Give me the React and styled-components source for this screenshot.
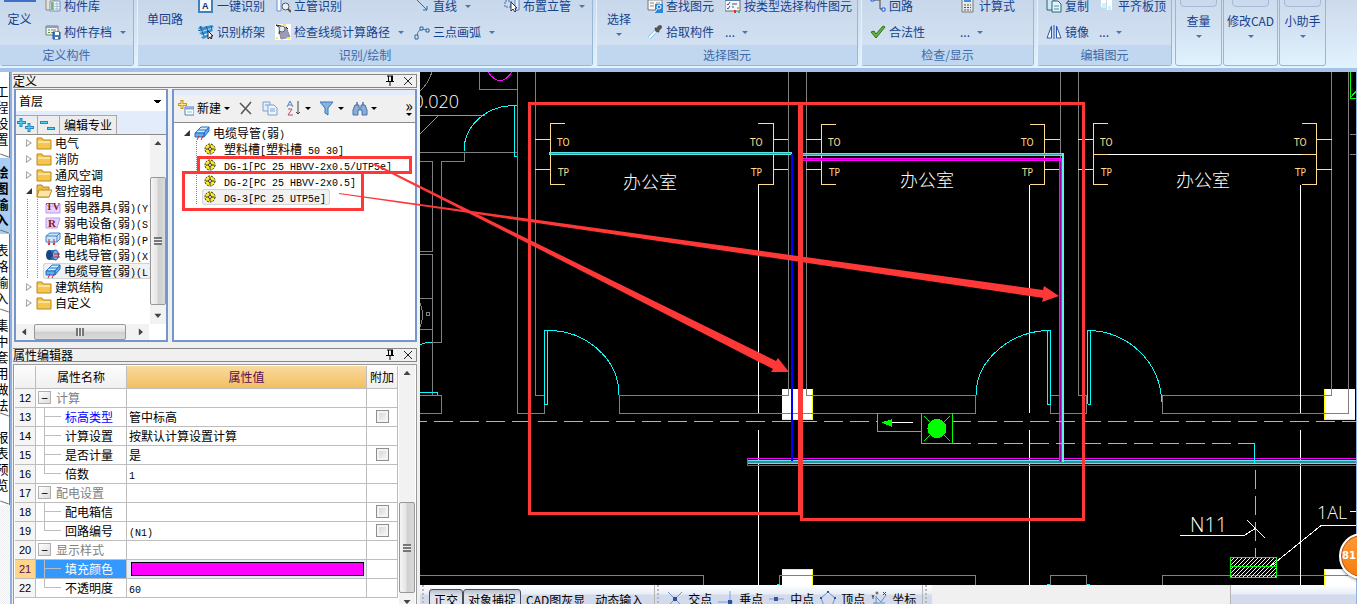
import React, { useState } from "react";
import styled, { createGlobalStyle, css } from "styled-components";

const ribbonGroups = [
  {
    title: "定义构件",
    big: { label: "定义", art: "define", width: 45 },
    columns: [
      {
        width: 88,
        items: [
          { icon: "library", label: "构件库" },
          { icon: "archive", label: "构件存档", menu: true },
        ],
      },
    ],
  },
  {
    title: "识别/绘制",
    big: { label: "单回路", art: "loop", width: 60 },
    columns: [
      {
        width: 77,
        items: [
          { icon: "autoText", label: "一键识别" },
          { icon: "bridge", label: "识别桥架" },
        ],
      },
      {
        width: 139,
        items: [
          { icon: "pipeSearch", label: "立管识别" },
          { icon: "pathCheck", label: "检查线缆计算路径", menu: true },
        ],
      },
      {
        width: 90,
        items: [
          { icon: "line", label: "直线", menu: true },
          { icon: "arc", label: "三点画弧", menu: true },
        ],
      },
      { width: 88, items: [{ icon: "riser", label: "布置立管", menu: true }, null] },
    ],
  },
  {
    title: "选择图元",
    big: { label: "选择", art: "select", width: 50, menu: true },
    columns: [
      {
        width: 78,
        items: [
          { icon: "find", label: "查找图元" },
          { icon: "picker", label: "拾取构件" },
        ],
      },
      { width: 132, items: [{ icon: "types", label: "按类型选择构件图元" }, { label: "...", menu: true }] },
    ],
  },
  {
    title: "检查/显示",
    columns: [
      {
        width: 90,
        items: [
          { icon: "circuit", label: "回路" },
          { icon: "check", label: "合法性" },
        ],
      },
      { width: 73, items: [{ icon: "calc", label: "计算式" }, { label: "...", menu: true }] },
    ],
  },
  {
    title: "编辑图元",
    columns: [
      {
        width: 53,
        items: [
          { icon: "copy", label: "复制" },
          { icon: "mirror", label: "镜像" },
        ],
      },
      { width: 72, items: [{ icon: "align", label: "平齐板顶" }, { label: "...", menu: true }] },
    ],
  },
];

const tallButtons = [
  { label: "查量", width: 47 },
  { label: "修改CAD", width: 55 },
  { label: "小助手", width: 47 },
];

const sideTabs = [
  { label: "工程设置", height: 86 },
  { label: "绘图输入", height: 76, active: true },
  { label: "表格输入", height: 79 },
  { label: "集中套用做法", height: 104 },
  { label: "报表预览", height: 88 },
];

const categories = [
  { label: "电气", icon: "folder" },
  { label: "消防", icon: "folder" },
  { label: "通风空调", icon: "folder" },
  {
    label: "智控弱电",
    icon: "folderOpen",
    children: [
      { label: "弱电器具(弱)(Y)", icon: "tv" },
      { label: "弱电设备(弱)(S)", icon: "device" },
      { label: "配电箱柜(弱)(P)", icon: "cabinet" },
      { label: "电线导管(弱)(X)", icon: "conduit" },
      { label: "电缆导管(弱)(L)", icon: "tray", selected: true },
    ],
  },
  { label: "建筑结构", icon: "folder" },
  { label: "自定义", icon: "folder" },
];

const components = [
  { label: "塑料槽[塑料槽 50 30]" },
  { label: "DG-1[PC 25 HBVV-2x0.5/UTP5e]" },
  { label: "DG-2[PC 25 HBVV-2x0.5]" },
  { label: "DG-3[PC 25 UTP5e]", selected: true },
];

const properties = [
  { id: 12, name: "计算", group: true },
  { id: 13, name: "标高类型", value: "管中标高", extra: true, link: true },
  { id: 14, name: "计算设置", value: "按默认计算设置计算" },
  { id: 15, name: "是否计量", value: "是", extra: true },
  { id: 16, name: "倍数", value: "1", last: true },
  { id: 17, name: "配电设置", group: true },
  { id: 18, name: "配电箱信", value: "", extra: true },
  { id: 19, name: "回路编号", value: "(N1)", extra: true, last: true },
  { id: 20, name: "显示样式", group: true },
  { id: 21, name: "填充颜色", color: "#ff00ff", selected: true },
  { id: 22, name: "不透明度", value: "60", last: true },
];

const icons = {
  library: (
    <>
      <path d="M1 1h8v11H1z" fill="#e6e2d8" stroke="#8d8a84" />
      <path d="M5 3h10v10H5z" fill="#fff" stroke="#6e8fb5" />
      <path d="M6 6h9M6 8.500h9M6 11h9M8.500 4v9M12 4v9" stroke="#9fb7d3" />
      <path d="M6 4h2v8H6z" fill="#7db36b" />
    </>
  ),
  archive: (
    <>
      <path d="M1 2h12v9H1z" fill="#f4f2ea" stroke="#7a7a74" />
      <path d="M1 2h12v2H1z" fill="#8aa0bd" />
      <path d="M3 6h2M3 8.500h2" stroke="#4a9a45" />
      <path d="M6 6h5M6 8.500h4" stroke="#888" />
      <path d="M8 8h7v7H8z" fill="#3f7fc4" stroke="#24568f" />
      <path d="M10 8h4v3h-4zM10 13h3v2h-3z" fill="#fff" />
    </>
  ),
  autoText: (
    <>
      <path d="M1 1h13v13H1z" fill="#f3f9fe" stroke="#3f83b8" strokeWidth="2" />
      <text x="4" y="11" fontSize="9" fontWeight="700" fontFamily="Liberation Sans" fill="#15315e">A</text>
    </>
  ),
  bridge: (
    <>
      <path d="M0 4l3-2 2 1 9-2 2 2-12 4zM1 9l12-4 2 2-11 4zM3 13l8-3 1 2-7 3z" fill="#2f93d8" />
      <path d="M2 2l4 10M8 2l3 8M0 6l3 1M13 2l1 4" stroke="#155c96" />
      <path d="M10 7v8l2-2 1 2 1-1-1-2h2z" fill="#fff" stroke="#223" />
    </>
  ),
  pipeSearch: (
    <>
      <path d="M2 0h4v13H2z" fill="#f6faff" stroke="#6f8fd0" />
      <circle cx="10.500" cy="8.500" r="3.500" fill="#e9f2fb" stroke="#555" />
      <path d="M13 11l3 3" stroke="#555" strokeWidth="2" />
    </>
  ),
  pathCheck: (
    <>
      <path d="M0 0h16v16H0z" fill="#fff" />
      <path d="M4 6l7-3 4 10-9 2z" fill="#9b9cb5" stroke="#889" />
      <path d="M1 1l4 3-1 6M1 1l5 1M11 3l2 2" stroke="#222" fill="none" />
      <circle cx="7" cy="5" r="3" fill="#e2e6f5" stroke="#667" />
      <path d="M8 0h3v2H8zM1 13h2v2H1zM12 13h3v2h-3z" fill="#ffee22" />
    </>
  ),
  line: <path d="M2 1l11 11M13 8v4H9" stroke="#1f6fae" fill="none" />,
  arc: (
    <>
      <path d="M3 13Q3 3 13 6" stroke="#7b6f6f" fill="none" />
      <path d="M1 11h3v4H1zM6 3h3v3H6zM12 5h3v3h-3z" fill="#cfe6fb" stroke="#2c6596" />
    </>
  ),
  riser: (
    <>
      <path d="M1 3h6v6H1z" fill="none" stroke="#3b6fae" strokeDasharray="2 1" />
      <path d="M11 1h4v11h-4z" fill="#e5f0ff" stroke="#5a82c8" />
      <path d="M7 4v9l2-2 2 3 1-1-1-3h2z" fill="#fff" stroke="#334" />
    </>
  ),
  find: (
    <>
      <path d="M1 0h14v12H1z" fill="#f8f8f4" stroke="#777" />
      <path d="M1 2h14M3 5h4M3 8h4M9 5h4" stroke="#888" />
      <path d="M8 6h8v9H8z" fill="#2c86d8" />
      <circle cx="12" cy="9" r="2" stroke="#fff" fill="none" />
      <path d="M10 11l-2 3" stroke="#fff" />
    </>
  ),
  picker: (
    <>
      <path d="M2 14l7-7" stroke="#5aa0d8" strokeWidth="3" />
      <path d="M2 14l7-7" stroke="#fff" strokeWidth="2" />
      <path d="M8 4l4 4" stroke="#444" strokeWidth="2" />
      <path d="M10 6l3-3" stroke="#555" strokeWidth="4" strokeLinecap="round" />
      <path d="M0 14h3v2H0z" fill="#aef2ff" />
    </>
  ),
  types: (
    <>
      <path d="M0 1h15v12H0z" fill="#f2f6fb" stroke="#667" />
      <path d="M0 2h15" stroke="#5d7fae" strokeWidth="2" />
      <path d="M2 6l1 1 2-3M2 10l1 1 2-3" stroke="#456" fill="none" />
      <path d="M7 6h5M7 9h2" stroke="#456" />
      <path d="M9 12h2v3H9z" fill="#d33" />
      <path d="M12 9h2v2h-2z" fill="#e9b93a" />
      <path d="M13 13h2v2h-2z" fill="#3b9" />
    </>
  ),
  circuit: (
    <>
      <path d="M3 2h7v9h4" stroke="#444" fill="none" />
      <path d="M1 0h3v3H1zM12 10h3v3h-3z" fill="#fff" stroke="#1750d8" />
    </>
  ),
  check: <path d="M1 8l3-1 2 3 7-8 2 1-9 11z" fill="#62b53c" stroke="#2f6f1b" />,
  calc: (
    <>
      <path d="M2 0h11v14H2z" fill="#e8e8e8" stroke="#777" />
      <path d="M4 1h7v3H4z" fill="#3f8fe0" />
      <path d="M4 7h7M4 9.500h7M4 12h7" stroke="#555" strokeDasharray="2 1" />
    </>
  ),
  copy: (
    <>
      <path d="M1 1h7v11H1z" fill="#cfe7f2" stroke="#2d6377" />
      <path d="M6 3h6l3 3v8H6z" fill="#e3f3fa" stroke="#2d6377" />
      <path d="M8 8h5M8 11h5" stroke="#4c91b0" />
    </>
  ),
  mirror: (
    <>
      <path d="M5.500 2v12H1zM10.500 2v12H15z" fill="#f4f8ff" stroke="#2d58a8" />
      <path d="M8 1v14" stroke="#2d58a8" />
    </>
  ),
  align: (
    <>
      <path d="M2 1h5v8H2zM8 1h5v11H8z" fill="#fff" />
      <path d="M3 5h4v5H3zM9 8h3v4H9z" fill="#c8f6fa" />
    </>
  ),
  folder: (
    <>
      <path d="M1 3h5l1 2h8v9H1z" fill="#f4c64f" stroke="#b98a25" />
      <path d="M2 6h12v2H2z" fill="#fbe29a" />
    </>
  ),
  folderOpen: (
    <>
      <path d="M1 2h5l1 2h6v10H1z" fill="#f0bc3e" stroke="#b98a25" />
      <path d="M3 7h13l-3 7H1z" fill="#fde6a4" stroke="#b98a25" />
    </>
  ),
  tv: (
    <>
      <path d="M1 14V5l2 2h10l2-2v9z" fill="#e4d4ff" stroke="#b79aec" />
      <text x="1" y="11" fontSize="10" fontWeight="700" fontFamily="Liberation Serif" fill="#8c1420">TV</text>
    </>
  ),
  device: (
    <>
      <path d="M1 3h14l-3 10H1z" fill="#e4d4ff" stroke="#b79aec" />
      <text x="3" y="12" fontSize="11" fontWeight="700" fontFamily="Liberation Serif" fill="#8c1420">R</text>
    </>
  ),
  cabinet: (
    <>
      <path d="M1 5l4-3h10v6l-3 3H1z" fill="#cde5fb" stroke="#3f83c6" />
      <path d="M1 5h11v6M12 5l3-3" stroke="#3f83c6" fill="none" />
      <path d="M4 8v6M9 8v6M3 12l1 2 1-2M8 12l1 2 1-2" stroke="#d22" fill="none" />
    </>
  ),
  conduit: (
    <>
      <path d="M4 3h7v10H4z" fill="#2f74c4" />
      <ellipse cx="4" cy="8" rx="3" ry="5" fill="#16457f" />
      <ellipse cx="10.500" cy="8" rx="3" ry="5" fill="#7fb4e8" stroke="#1d4d86" />
      <path d="M9 7h6M9 10h6" stroke="#e01b24" />
    </>
  ),
  tray: (
    <>
      <path d="M1 8l6-6h8l-5 6z" fill="#d6ebfd" stroke="#1f73c7" />
      <path d="M1 8h9v4H1zM10 8l5-6v4l-5 6z" fill="#5eaef2" stroke="#1f73c7" />
      <path d="M4 5h8" stroke="#1f73c7" />
      <path d="M5 11l-2 4M9 11l-2 4" stroke="#e01b24" />
    </>
  ),
  gear: (
    <>
      <circle cx="6" cy="8" r="5" fill="#ffee22" stroke="#222" strokeDasharray="2 1" />
      <circle cx="6" cy="8" r="3" fill="#ffee22" />
      <circle cx="6" cy="8" r="1.500" fill="#fff" stroke="#333" />
      <path d="M6 4v2M6 10v2M2 8h2M8 8h2" stroke="#333" />
    </>
  ),
  create: (
    <>
      <path d="M4 0v9M0 4.500h9" stroke="#c79a1f" strokeWidth="3" />
      <path d="M4 1v7M1 4.500h7" stroke="#ffe88c" />
      <path d="M7 7h9v8H7z" fill="#fff" stroke="#4f82c4" />
      <path d="M7 8.500h9" stroke="#7aa6de" strokeWidth="2" />
      <path d="M9 12h5" stroke="#9bb" />
    </>
  ),
  remove: <path d="M2 3l11 11M13 2L3 14" stroke="#555" strokeWidth="1.500" fill="none" />,
  duplicate: (
    <>
      <path d="M1 2h7v9H1z" fill="#e5effb" stroke="#7c9fd0" />
      <path d="M6 5h6l3 3v7H6z" fill="#eef5fd" stroke="#7c9fd0" />
      <path d="M8 9h5M8 11h5M3 5h3" stroke="#7c9fd0" />
    </>
  ),
  sort: (
    <>
      <path d="M1 7l3-6 3 6M2 5h4" stroke="#4b83c6" fill="none" />
      <path d="M2 9h4l-4 6h5" stroke="#b8505a" fill="none" />
      <path d="M12 1v13M10 12l2 2 2-2" stroke="#444" fill="none" />
    </>
  ),
  filter: <path d="M1 2h13L9 8v7l-3-2V8z" fill="#84b4e4" stroke="#3b74b5" />,
  binoculars: (
    <>
      <path d="M4 2h2v3H4zM10 2h2v3h-2z" fill="#6f93c4" />
      <path d="M3 5h4v3h2V5h4l2 5v5h-5v-5H6v5H1v-5z" fill="#8cadd8" stroke="#4a70a8" />
    </>
  ),
  pin: <path d="M3 1h6M4.500 1v5M7.500 1v5M8.500 1v5M2 6.500h8M6 7v4" stroke="#000" fill="none" />,
  close: <path d="M2 2l8 8M10 2l-8 8" stroke="#222" fill="none" />,
  plusPlus: (
    <>
      <path d="M5 1v9M1 5.500h9M13 6v9M9 10.500h9" stroke="#2785c9" strokeWidth="3" />
      <path d="M5 2v7M2 5.500h7M13 7v7M10 10.500h7" stroke="#58d4f2" />
    </>
  ),
  minusMinus: (
    <>
      <path d="M2 5.500h8M9 11.500h8" stroke="#2785c9" strokeWidth="3" />
      <path d="M3 5.500h6M10 11.500h6" stroke="#58d4f2" />
    </>
  ),
  snapCross: (
    <>
      <path d="M1 1l14 14M15 1L1 15" stroke="#7094cc" />
      <path d="M6 6h4v4H6z" fill="#2c4f9e" />
    </>
  ),
  snapFoot: (
    <>
      <path d="M0 11h15M12 0v14" stroke="#7aa0dc" />
      <path d="M10 9h4v4h-4z" fill="#2c4f9e" />
    </>
  ),
  snapMid: (
    <>
      <path d="M0 8h15" stroke="#7aa0dc" />
      <path d="M5 6h4v4H5z" fill="#3c5596" />
    </>
  ),
  snapVertex: (
    <>
      <path d="M8 1l7 6-3 8H4L1 7z" fill="none" stroke="#5f94d4" />
      <path d="M7 0h2v2H7zM0 6h2v2H0zM14 6h2v2h-2z" fill="#2c4f9e" />
    </>
  ),
  snapCoord: (
    <>
      <path d="M5 5v9M5 6l5 5 5-7M2 12h12" stroke="#5f94d4" fill="none" />
      <path d="M1 4l1 2 1-2M2 6v2M12 1l3 3M15 1l-3 3" stroke="#444" fill="none" />
      <circle cx="6" cy="2" r="1" fill="none" stroke="#444" />
    </>
  ),
};

const Icon = ({ name, width = 16, height = 16 }) => (
  <IconSvg width={width} height={height} viewBox={`0 0 ${width} ${height}`} aria-hidden="true">
    {icons[name]}
  </IconSvg>
);

// ASCII runs are set in a half-width face so they line up with the ideographs
const MixedText = ({ children }) =>
  children
    .split(/([\x20-\x7e]+)/)
    .map((part, i) => (i % 2 ? <Latin key={i}>{part}</Latin> : part));

const Ribbon = () => (
  <RibbonBar>
    {ribbonGroups.map((group) => (
      <RibbonGroup key={group.title}>
        <GroupBody $pad={group.big ? 0 : 8}>
          {group.big && (
            <BigButton $width={group.big.width}>
              <BigArt $kind={group.big.art} />
              <BigLabel>{group.big.label}</BigLabel>
              {group.big.menu && <Caret />}
            </BigButton>
          )}
          {group.columns.map((column, i) => (
            <RibbonColumn key={i} $width={column.width}>
              {column.items.map(
                (item) =>
                  item && (
                    <RibbonItem key={item.label}>
                      {item.icon && <Icon name={item.icon} />}
                      <span>{item.label}</span>
                      {item.menu && <Caret $gap={item.label === "..." ? 4 : 5} />}
                    </RibbonItem>
                  )
              )}
            </RibbonColumn>
          ))}
        </GroupBody>
        <GroupTitle>{group.title}</GroupTitle>
      </RibbonGroup>
    ))}
    {tallButtons.map((button) => (
      <TallButton key={button.label} $width={button.width}>
        <TallArt />
        <span>{button.label}</span>
        <Caret />
      </TallButton>
    ))}
  </RibbonBar>
);

const Scrollbar = ({ horizontal, before, thumb, after, overhang }) => (
  <ScrollTrack $horizontal={horizontal} $overhang={overhang}>
    <ScrollArrow aria-label={horizontal ? "left" : "up"}>
      <ArrowMark $dir={horizontal ? "left" : "up"} />
    </ScrollArrow>
    <ScrollSpace $grow={before} />
    <ScrollThumb $grow={thumb} $horizontal={horizontal}>
      <ThumbGrip $horizontal={horizontal} />
    </ScrollThumb>
    <ScrollSpace $grow={after} />
    <ScrollArrow aria-label={horizontal ? "right" : "down"}>
      <ArrowMark $dir={horizontal ? "right" : "down"} />
    </ScrollArrow>
  </ScrollTrack>
);

const DockTitle = ({ children }) => (
  <TitleBar>
    <TitleText>{children}</TitleText>
    <IconButton aria-label="pin">
      <Icon name="pin" width={12} height={12} />
    </IconButton>
    <IconButton aria-label="close">
      <Icon name="close" width={12} height={12} />
    </IconButton>
  </TitleBar>
);

const CategoryPane = () => (
  <Pane $grow={153}>
    <FloorSelect aria-label="楼层" defaultValue="首层">
      <option>首层</option>
    </FloorSelect>
    <TreeTools>
      <ToolTab aria-label="展开">
        <Icon name="plusPlus" width={19} height={16} />
      </ToolTab>
      <ToolTab aria-label="折叠">
        <Icon name="minusMinus" width={19} height={16} />
      </ToolTab>
      <ToolTab>编辑专业</ToolTab>
    </TreeTools>
    <TreeArea>
      <TreeScroll>
        <TreeList>
          {categories.map((item) => (
            <li key={item.label}>
              <TreeRow $indent={8}>
                <Expander $open={!!item.children} />
                <Icon name={item.icon} />
                <TreeLabel>{item.label}</TreeLabel>
              </TreeRow>
              {item.children && (
                <ChildList $rail={11} $inner={21}>
                  {item.children.map((child) => (
                    <li key={child.label}>
                      <TreeRow $indent={27} $selected={child.selected}>
                        <Icon name={child.icon} />
                        <TreeLabel>
                          <MixedText>{child.label}</MixedText>
                        </TreeLabel>
                      </TreeRow>
                    </li>
                  ))}
                </ChildList>
              )}
            </li>
          ))}
        </TreeList>
        <Scrollbar before={26} thumb={126} after={3} />
      </TreeScroll>
      <BottomScroll>
        <Scrollbar horizontal before={2} thumb={89} after={7} />
      </BottomScroll>
    </TreeArea>
  </Pane>
);

const ComponentPane = () => (
  <Pane $grow={246}>
    <Toolbar>
      <ToolButton>
        <Icon name="create" />
        <span>新建</span>
        <SmallCaret />
      </ToolButton>
      <ToolButton aria-label="删除">
        <Icon name="remove" />
      </ToolButton>
      <ToolButton aria-label="复制">
        <Icon name="duplicate" />
      </ToolButton>
      <ToolButton aria-label="排序">
        <Icon name="sort" />
        <SmallCaret />
      </ToolButton>
      <ToolButton aria-label="过滤">
        <Icon name="filter" />
        <SmallCaret />
      </ToolButton>
      <ToolButton aria-label="查找">
        <Icon name="binoculars" />
        <SmallCaret />
      </ToolButton>
      <MoreButton aria-label="更多">
        <span>»</span>
        <SmallCaret />
      </MoreButton>
    </Toolbar>
    <ComponentTree>
      <TreeRow $indent={8}>
        <Expander $open />
        <Icon name="tray" />
        <TreeLabel>
          <MixedText>电缆导管(弱)</MixedText>
        </TreeLabel>
      </TreeRow>
      <ChildList $rail={22}>
        {components.map((item) => (
          <li key={item.label}>
            <TreeRow $indent={28} $selected={item.selected}>
              <Icon name="gear" width={12} />
              <TreeLabel $gap={8}>
                <MixedText>{item.label}</MixedText>
              </TreeLabel>
            </TreeRow>
          </li>
        ))}
      </ChildList>
    </ComponentTree>
  </Pane>
);

const PropertyEditor = () => {
  const [checked, setChecked] = useState({});

  const toggle = (id) => {
    setChecked({ ...checked, [id]: !checked[id] });
  };

  return (
    <PropertyBody>
      <TableWrap>
        <PropertyTable>
          <colgroup>
            <col width="21" />
            <col width="91" />
            <col />
            <col width="31" />
          </colgroup>
          <thead>
            <tr>
              <HeadCell />
              <HeadCell>属性名称</HeadCell>
              <HeadCell $active>属性值</HeadCell>
              <HeadCell>附加</HeadCell>
            </tr>
          </thead>
          <tbody>
            {properties.map((row) => (
              <tr key={row.id}>
                <NumberCell $selected={row.selected}>{row.id}</NumberCell>
                <NameCell $selected={row.selected}>
                  <NameInner $group={row.group}>
                    {row.group ? (
                      <Collapse aria-label={`折叠${row.name}`}>−</Collapse>
                    ) : (
                      <Branch $last={row.last} />
                    )}
                    <NameText $group={row.group} $link={row.link}>
                      {row.name}
                    </NameText>
                  </NameInner>
                </NameCell>
                <ValueCell $selected={row.selected}>
                  {row.color ? (
                    <Swatch aria-label={row.name} $color={row.color} />
                  ) : (
                    <MixedText>{row.value || ""}</MixedText>
                  )}
                </ValueCell>
                <CheckCell>
                  {row.extra && (
                    <CheckBox
                      type="checkbox"
                      aria-label={`附加 ${row.name}`}
                      checked={!!checked[row.id]}
                      onChange={() => toggle(row.id)}
                    />
                  )}
                </CheckCell>
              </tr>
            ))}
          </tbody>
        </PropertyTable>
      </TableWrap>
      <Scrollbar before={122} thumb={89} after={1} overhang />
    </PropertyBody>
  );
};

const Drawing = () => (
  <DrawingSvg width="100%" height="100%" role="img" aria-label="平面图">
    <defs>
      <pattern id="hatch" width="4" height="4" patternUnits="userSpaceOnUse">
        <path d="M0 4L4 0M-1 1L1 -1M3 5L5 3" stroke="#fff" />
      </pattern>
    </defs>
    <g transform="translate(-420 -72)" fill="none" shapeRendering="crispEdges">
      {/* columns */}
      <g fill="#fff">
        <path d="M782 389h31v31h-31zM782 569h31v18h-31z" />
        <path d="M1324 389h31v31h-31zM1324 569h33v18h-33z" />
      </g>
      <g stroke="#ffff00">
        <path d="M812.500 389V419.500H782M812.500 587V569.500H782" />
        <path d="M1324.500 389V419.500H1355M1324.500 587V569.500H1357" />
      </g>
      {/* walls */}
      <g stroke="#808080">
        <path d="M432 72Q428 84 420 91M479.500 72V89.500H517M420 152.500H517M464.500 152V161.500H441.500V342.500H432" />
        <path d="M420 161.500H432.500V251.500H420M420 254.500H432.500V395M420 298.500H432M420 329.500H432M420 303Q425 315 420 327" />
        <circle cx="428" cy="314" r="2" />
        <path d="M420 395.500H441.500V413.500H420" />
        <path d="M517.500 72V413.500H544.500V395.500H535.500V72" />
        <path d="M788.500 72V395.500H619.500V413.500H975.500V395.500H806.500V72" />
        <path d="M1060.500 72V395.500H1050.500V413.500H1086.500V395.500H1078.500V72" />
        <path d="M1331.500 72V395.500H1162.500V413.500H1348.500V72M1350 134.500H1357M1350 154.500H1357" />
        <path d="M420 575.500H703.500V586M779.500 586V575.500H975.500V586M1050.500 586V575.500H1086.500V586M1162.500 586V575.500H1348" />
      </g>
      {/* structural axes */}
      <g stroke="#fff">
        <path d="M758.500 185V413M758.500 430V586M1029.500 185V413M1029.500 430V586" />
        <path d="M1300.500 185V413M1300.500 430V586M1108 154.500H1302" />
      </g>
      <path d="M488 72Q500 89 512 72" stroke="#ff00ff" />
      <g stroke="#00ff00">
        <path d="M420 115.500H485M420 134L438 116M1350.500 72V98.500H1357M1351 97L1357 90" />
      </g>
      {/* doors */}
      <g stroke="#00ffff">
        <path d="M464 151C464 125 487 105.500 514.500 105.500V156.500H517M514 105.500H517" />
        <path d="M420 345Q425 342 432 342.500M420 392.500H437.500V395" />
        <path d="M547.500 404.500H544.500V330.500H547.500V404M547 330.500C585 330 619 358 619 395" />
        <path d="M1050.500 404.500H1047.500V330.500H1050.500V404M1047 330.500C1010 332 976 360 976 395" />
        <path d="M1087.500 404.500H1090.500V330.500H1087.500V404M1090 330.500C1128 332 1161 362 1161.500 402" />
        <path d="M777 584.500H780M1047 584.500H1050M1087 584.500H1090" />
      </g>
      {/* sockets */}
      <g stroke="#ffdc8f">
        <path d="M565 123.500H550.500V184.500H565M535 139.500H550M535 169.500H550" />
        <path d="M758 123.500H773.500V184.500H758M773 139.500H788M773 169.500H788" />
        <path d="M836 124.500H821.500V184.500H836M806 139.500H821M806 169.500H821" />
        <path d="M1030 124.500H1044.500V184.500H1030M1044 139.500H1060M1044 169.500H1060" />
        <path d="M1108 123.500H1093.500V184.500H1108M1078 139.500H1093M1078 169.500H1093M1093 154.500H1108" />
        <path d="M1302 123.500H1316.500V184.500H1302M1316 139.500H1332M1316 169.500H1332M1302 154.500H1316" />
      </g>
      {/* cables */}
      <path d="M747 458.500H1357M747 465.500H1357M747.500 458V466" stroke="#ff00ff" />
      <path d="M748 462H1357" stroke="#2f8f9a" strokeWidth="3" />
      <path d="M748 460.500H1357M748 463.500H1357" stroke="#62e4ea" />
      <path d="M549 153.500H792M803 154.500H1063" stroke="#55e6e6" strokeWidth="3" />
      <path d="M551 153.500H791M803 154.500H1062" stroke="#38a0a0" />
      <path d="M803 159.500H1060" stroke="#ff00ff" strokeWidth="3" />
      <path d="M803 159.500H1060" stroke="#a000a0" />
      <path d="M792 154V461" stroke="#0000ff" strokeWidth="2" />
      <path d="M1060.500 158V462" stroke="#ff00ff" strokeWidth="3" />
      <path d="M1060.500 161V462" stroke="#a000a0" />
      <path d="M1063 153V462" stroke="#62f0f0" strokeWidth="2" />
      {/* lighting circuit */}
      <g stroke="#00ffff">
        <path d="M420 421.500H427M434 421.500H877" strokeDasharray="19 7" />
        <path d="M952 421.500H1357M952 443.500H1254" strokeDasharray="19 7" />
        <path d="M1249 443.500H1254.500V463" />
        <path d="M1255.500 470V557" strokeDasharray="19 7" />
      </g>
      <g stroke="#00ff00">
        <path d="M877.500 413V431.500H921M921.500 413V443.500H952.500V413M924 416L950 441M950 416L924 441" />
        <circle cx="937" cy="428.500" r="9" fill="#00ff00" />
        <path d="M883 422.500L891 420V426Z" fill="#00ff00" />
      </g>
      <path d="M892 422.500H913" stroke="#fff" />
      <path d="M1230 557H1276V577H1230Z" fill="url(#hatch)" stroke="#00ff00" />
      <path d="M1230 566.500H1276" stroke="#00ff00" />
      <path d="M1180 535.500H1244L1256 528M1247 520L1265 538M1350 511.500H1357M1357 525.500H1321L1271 566" stroke="#fff" />
    </g>
    <g transform="translate(-420 -72)">
      <CadText x="459" y="108" $size={18} textAnchor="end">0.020</CadText>
      <CadText x="1190" y="532" $size={20}>N11</CadText>
      <CadText x="1317" y="519" $size={18}>1AL</CadText>
      {[557, 750, 828, 1021, 1100, 1294].map((x) => (
        <g key={x}>
          <SocketText x={x} y="146">TO</SocketText>
          <SocketText x={x + 1} y="176">TP</SocketText>
        </g>
      ))}
      <RoomText x="623" y="189">办公室</RoomText>
      <RoomText x="900" y="187">办公室</RoomText>
      <RoomText x="1176" y="187">办公室</RoomText>
    </g>
  </DrawingSvg>
);

const Markup = () => (
  <MarkupSvg aria-hidden="true">
    <g fill="none" stroke="#fe3737" strokeWidth="3" shapeRendering="crispEdges">
      <path d="M198.500 157.500H410.500V172.500H198.500Z" />
      <path d="M183.500 172.500H362.500V209.500H183.500Z" />
      <path d="M529.500 103.500H799.500V513.500H529.500Z" />
      <path d="M801.500 103.500H1083.500V519.500H801.500Z" />
    </g>
    <g fill="#fe3737">
      <path d="M374 163L530 240L776 361L778 358L789 372L771 372L773 369L529 244L374 165Z" />
      <path d="M339 193L531 219L1043 290L1044 286L1059 296L1042 302L1043 298L530 222L339 194Z" />
    </g>
  </MarkupSvg>
);

const StatusBar = () => (
  <Status>
    <Grip />
    <StatusToggle $on>正交</StatusToggle>
    <StatusToggle $on>对象捕捉</StatusToggle>
    <StatusToggle>CAD图灰显</StatusToggle>
    <StatusToggle>动态输入</StatusToggle>
    <Divider />
    <Grip />
    <SnapGroup>
      {[
        ["snapCross", "交点"],
        ["snapFoot", "垂点"],
        ["snapMid", "中点"],
        ["snapVertex", "顶点"],
        ["snapCoord", "坐标"],
      ].map(([icon, label]) => (
        <SnapButton key={label}>
          <Icon name={icon} />
          <span>{label}</span>
        </SnapButton>
      ))}
    </SnapGroup>
    <Divider />
    <Grip />
    <StatusBlank />
    <StatusEnd />
  </Status>
);

const App = () => {
  return (
    <>
      <GlobalStyle />
      <Window>
        <Ribbon />
        <Workspace>
          <SideBar>
            {sideTabs.map((tab) => (
              <SideTab key={tab.label} $active={tab.active} $height={tab.height}>
                <span>{tab.label}</span>
              </SideTab>
            ))}
          </SideBar>
          <Docks>
            <Dock $grow={275}>
              <DockTitle>定义</DockTitle>
              <PaneRow>
                <CategoryPane />
                <ComponentPane />
              </PaneRow>
            </Dock>
            <Dock $grow={257}>
              <DockTitle>属性编辑器</DockTitle>
              <PropertyEditor />
            </Dock>
          </Docks>
          <CanvasColumn>
            <CanvasArea>
              <Drawing />
            </CanvasArea>
            <StatusBar />
          </CanvasColumn>
        </Workspace>
        <Markup />
        <SpeedBall>81</SpeedBall>
      </Window>
    </>
  );
};

export default App;

// Styled Components

const GlobalStyle = createGlobalStyle`
  * {
    box-sizing: border-box;
  }
  body {
    margin: 0;
    overflow: hidden;
    font-family: "Noto Sans CJK SC", "Noto Sans", sans-serif;
    font-size: 12px;
    line-height: 16px;
    color: #000;
  }
  button {
    margin: 0;
    padding: 0;
    border: 0;
    background: none;
    font: inherit;
    color: inherit;
    white-space: nowrap;
  }
  ul {
    margin: 0;
    padding: 0;
    list-style: none;
  }
`;

const Window = styled.div`
  position: relative;
  display: flex;
  flex-direction: column;
  height: 100vh;
  overflow: hidden;
  background: #f0f0f0;
`;

const IconSvg = styled.svg`
  flex: none;
  fill: none;
`;

const Latin = styled.span`
  font-family: "Liberation Mono", monospace;
  font-size: 10px;
  line-height: 10px;
  white-space: pre;
`;

const Caret = styled.i`
  flex: none;
  margin-left: ${(p) => p.$gap || 0}px;
  border: 3px solid transparent;
  border-top-color: #4a74ad;
  border-bottom: 0;
`;

const SmallCaret = styled(Caret)`
  border-top-color: #000;
`;

const RibbonBar = styled.header`
  flex: none;
  display: flex;
  align-items: flex-end;
  gap: 3px;
  height: 72px;
  overflow: hidden;
  padding-bottom: 2px;
  border-bottom: 4px solid #a5c2e8;
  background: linear-gradient(#cddaeb, #d9e8f7 60%, #e2f3fd);
  color: #15428b;
`;

const RibbonGroup = styled.section`
  flex: none;
  height: 74px;
  border: 1px solid #93b8d9;
  border-left-color: #e6f1fb;
  border-radius: 3px;
  background: linear-gradient(#c6d6ea, #d7e5f4);
  &:first-child {
    border-left: 0;
  }
`;

const GroupBody = styled.div`
  display: flex;
  height: 52px;
  padding-left: ${(p) => p.$pad}px;
`;

const GroupTitle = styled.div`
  height: 20px;
  line-height: 20px;
  text-align: center;
  background: #c1d7ef;
  color: #3e6aaa;
`;

const RibbonColumn = styled.div`
  display: flex;
  flex-direction: column;
  width: ${(p) => p.$width}px;
`;

const RibbonItem = styled.button`
  display: flex;
  align-items: center;
  gap: 3px;
  height: 26px;
  line-height: 12px;
`;

const BigButton = styled.button`
  display: flex;
  flex-direction: column;
  align-items: center;
  gap: 9px;
  width: ${(p) => p.$width}px;
  padding-right: 6px;
`;

const bigArt = {
  define: "#3f6fc8",
  loop: "transparent",
  select: "transparent",
};

const BigArt = styled.i`
  flex: none;
  width: 32px;
  height: 9px;
  background: ${(p) => bigArt[p.$kind]};
`;

const BigLabel = styled.span`
  line-height: 16px;
  margin-bottom: -3px;
`;

const TallButton = styled.button`
  display: flex;
  flex-direction: column;
  align-items: center;
  flex: none;
  gap: 6px;
  width: ${(p) => p.$width}px;
  height: 75px;
  margin-right: -2px;
  border: 1px solid #93b8d9;
  border-radius: 3px;
  background: linear-gradient(#ccdaec, #d3e2f2 50%, #e0f3fe);
`;

const TallArt = styled.i`
  flex: none;
  width: 37px;
  height: 15px;
  border: 1px solid #a3bbd8;
  border-radius: 0 0 4px 4px;
  background: #cbd9ec;
`;

const Workspace = styled.main`
  flex: 1;
  display: flex;
  min-height: 0;
`;

const SideBar = styled.nav`
  flex: none;
  width: 12px;
  overflow: hidden;
  border-right: 2px solid #8fb0dc;
  background: conic-gradient(#fff 25%, #ececec 0 50%, #fff 0 75%, #ececec 0) 0 0 / 2px 2px;
`;

const SideTab = styled.button`
  position: relative;
  display: flex;
  align-items: center;
  justify-content: flex-end;
  width: 10px;
  height: ${(p) => p.$height}px;
  border-right: 1px solid #777;
  background: #fff;
  font-size: 13px;
  span {
    width: 14px;
    flex: none;
    white-space: normal;
    line-height: 16px;
  }
  &::after {
    content: "";
    position: absolute;
    left: 0;
    right: 0;
    bottom: 2px;
    border-bottom: 1px solid #777;
    transform: rotate(20deg);
  }
  ${(p) =>
    p.$active &&
    css`
      border-right-color: #a9cdf3;
      background: #a9cdf3;
      font-weight: 700;
    `}
`;

const Docks = styled.aside`
  flex: none;
  display: flex;
  flex-direction: column;
  width: 408px;
  padding: 2px 3px 0 1px;
`;

const Dock = styled.section`
  display: flex;
  flex-direction: column;
  flex: ${(p) => p.$grow} 1 0;
  min-height: 0;
`;

const TitleBar = styled.div`
  flex: none;
  display: flex;
  align-items: center;
  gap: 6px;
  height: 14px;
  padding-right: 2px;
  border: 1px solid #868686;
  border-left: 0;
  background: #f0f0f0;
`;

const TitleText = styled.h2`
  flex: 1;
  margin: 0;
  font-size: 12px;
  font-weight: 400;
  line-height: 12px;
`;

const IconButton = styled.button`
  display: flex;
`;

const PaneRow = styled.div`
  flex: 1;
  display: flex;
  gap: 4px;
  min-height: 0;
  padding: 1px 0 6px 1px;
`;

const Pane = styled.div`
  display: flex;
  flex-direction: column;
  flex: ${(p) => p.$grow} 1 0;
  min-width: 0;
  border: 2px solid #7397cd;
  border-top: 1px solid #7397cd;
  background: #e2ecfa;
`;

const FloorSelect = styled.select`
  flex: none;
  width: 100%;
  height: 21px;
  padding: 0 3px;
  border: 0;
  appearance: none;
  background: linear-gradient(#000, #000) right 5px top 10px / 7px 1px no-repeat,
    linear-gradient(#000, #000) right 6px top 11px / 5px 1px no-repeat,
    linear-gradient(#000, #000) right 7px top 12px / 3px 1px no-repeat, #fff;
  font: inherit;
`;

const TreeTools = styled.div`
  flex: none;
  display: flex;
  padding-top: 4px;
`;

const ToolTab = styled.button`
  display: flex;
  align-items: center;
  height: 19px;
  padding: 0 2px 0 0;
  border: 1px solid #a8a8a8;
  border-left: 0;
  border-bottom: 0;
  background: #ededed;
  &:last-child {
    padding: 0 4px;
  }
`;

const TreeArea = styled.div`
  flex: 1;
  display: flex;
  flex-direction: column;
  min-height: 0;
  border-top: 1px solid #8a8a8a;
  background: #fff;
`;

const TreeScroll = styled.div`
  flex: 1;
  display: flex;
  min-height: 0;
`;

const TreeList = styled.ul`
  flex: 1;
  min-width: 0;
  overflow: hidden;
`;

const BottomScroll = styled.div`
  flex: none;
  padding-right: 17px;
`;

const TreeRow = styled.div`
  display: flex;
  align-items: center;
  width: fit-content;
  height: 16px;
  margin-left: ${(p) => p.$indent}px;
  padding: 0 4px 0 2px;
  white-space: nowrap;
  ${(p) =>
    p.$selected &&
    css`
      border-radius: 3px;
      background: #f1f1f1;
      box-shadow: inset 0 0 0 1px #d4d4d4;
    `}
`;

const TreeLabel = styled.span`
  margin-left: ${(p) => p.$gap || 3}px;
`;

const Expander = styled.i`
  flex: none;
  width: 6px;
  height: 8px;
  margin-right: 4px;
  background: #a0a0a0;
  clip-path: polygon(0 0, 100% 50%, 0 100%, 0 85%, 70% 50%, 15% 20%, 15% 100%, 0 100%);
  ${(p) =>
    p.$open &&
    css`
      height: 6px;
      background: #333;
      clip-path: polygon(100% 0, 100% 100%, 0 100%);
    `}
`;

const dots = (x) =>
  `repeating-linear-gradient(#888 0 1px, #fff 1px 2px) ${x}px 0 / 1px 100% no-repeat`;

const ChildList = styled.ul`
  background: ${(p) => dots(p.$rail)}${(p) => (p.$inner ? `, ${dots(p.$inner)}` : "")};
`;

const ScrollTrack = styled.div`
  flex: none;
  display: flex;
  flex-direction: ${(p) => (p.$horizontal ? "row" : "column")};
  ${(p) => (p.$horizontal ? "height: 16px;" : "width: 16px;")}
  margin-bottom: ${(p) => (p.$overhang ? -6 : 0)}px;
  background: #f2f2f2;
`;

const ScrollArrow = styled.button`
  flex: none;
  display: flex;
  align-items: center;
  justify-content: center;
  width: 16px;
  height: 16px;
`;

const arrowShapes = {
  up: "polygon(50% 20%, 100% 80%, 0 80%)",
  down: "polygon(0 20%, 100% 20%, 50% 80%)",
  left: "polygon(80% 0, 80% 100%, 20% 50%)",
  right: "polygon(20% 0, 80% 50%, 20% 100%)",
};

const ArrowMark = styled.i`
  width: 7px;
  height: 7px;
  background: #444;
  clip-path: ${(p) => arrowShapes[p.$dir]};
`;

const ScrollSpace = styled.div`
  flex: ${(p) => p.$grow} 1 0;
`;

const ScrollThumb = styled.div`
  flex: ${(p) => p.$grow} 1 0;
  display: flex;
  align-items: center;
  justify-content: center;
  border: 1px solid #979797;
  border-radius: 2px;
  background: linear-gradient(
    ${(p) => (p.$horizontal ? "to bottom" : "to right")},
    #f5f5f5,
    #e4e4e4 45%,
    #cfcfcf 50%,
    #dadada
  );
`;

const ThumbGrip = styled.i`
  width: 8px;
  height: 8px;
  background: repeating-linear-gradient(
    ${(p) => (p.$horizontal ? "to right" : "to bottom")},
    #777 0 2px,
    #eee 2px 3px
  );
`;

const Toolbar = styled.div`
  flex: none;
  display: flex;
  align-items: center;
  gap: 8px;
  height: 32px;
  padding: 4px 2px 0 4px;
  background: linear-gradient(#e2ecfa 0 5px, #f0f0f0 5px);
`;

const ToolButton = styled.button`
  display: flex;
  align-items: center;
  gap: 3px;
`;

const MoreButton = styled.button`
  display: flex;
  flex-direction: column;
  align-items: center;
  margin-left: auto;
  font-size: 16px;
  line-height: 8px;
  gap: 4px;
`;

const ComponentTree = styled.div`
  flex: 1;
  min-height: 0;
  padding-top: 2px;
  border-top: 1px solid #8a8a8a;
  background: #fff;
`;

const PropertyBody = styled.div`
  flex: 1;
  display: flex;
  min-height: 0;
  margin-top: 2px;
  padding-right: 1px;
  overflow: hidden;
  border: 1px solid #9a9a9a;
  border-bottom: 0;
  background: #fff;
`;

const TableWrap = styled.div`
  flex: 1;
  min-width: 0;
  padding: 1px 1px 0 1px;
`;

const PropertyTable = styled.table`
  width: 100%;
  table-layout: fixed;
  border-spacing: 0;
`;

const cellBorder = css`
  height: 19px;
  padding: 0;
  border-right: 1px solid #bdbdbd;
  border-bottom: 1px solid #bdbdbd;
  line-height: 16px;
  white-space: nowrap;
`;

const HeadCell = styled.th`
  ${cellBorder}
  height: 23px;
  background: linear-gradient(#fcfcfc, #f0f0f0);
  font-weight: 400;
  ${(p) =>
    p.$active &&
    css`
      background: linear-gradient(#f9d9a0, #f2c060);
      color: #5a0a50;
    `}
`;

const NumberCell = styled.td`
  ${cellBorder}
  font-family: "Liberation Sans", sans-serif;
  font-size: 11px;
  text-align: center;
  background: ${(p) => (p.$selected ? "#ffd58c" : "#f5f5f5")};
  color: ${(p) => (p.$selected ? "#5a0a50" : "#000")};
`;

const NameCell = styled.td`
  ${cellBorder}
  background: ${(p) => (p.$selected ? "#3399ff" : "#fff")};
  color: ${(p) => (p.$selected ? "#fff" : "#000")};
`;

const NameInner = styled.div`
  display: flex;
  align-items: center;
  gap: ${(p) => (p.$group ? 5 : 4)}px;
  height: 18px;
  padding-left: ${(p) => (p.$group ? 2 : 8)}px;
`;

const Branch = styled.i`
  width: 17px;
  height: 18px;
  background: linear-gradient(#bdbdbd, #bdbdbd) 0 50% / 100% 1px no-repeat,
    linear-gradient(#bdbdbd, #bdbdbd) 0 0 / 1px ${(p) => (p.$last ? "50%" : "100%")} no-repeat;
`;

const Collapse = styled.button`
  width: 13px;
  height: 13px;
  border: 1px solid #b0b0b0;
  background: linear-gradient(135deg, #fff, #dcdcdc);
  line-height: 10px;
`;

const NameText = styled.span`
  color: ${(p) => (p.$group ? "#808080" : p.$link ? "#0000ff" : "inherit")};
`;

const ValueCell = styled.td`
  ${cellBorder}
  padding: 0 4px 0 2px;
  background: ${(p) => (p.$selected ? "#e3effc" : "#fff")};
`;

const Swatch = styled.button`
  display: block;
  width: 100%;
  height: 14px;
  margin-left: 2px;
  border: 1px solid #000;
  background: ${(p) => p.$color};
`;

const CheckCell = styled.td`
  ${cellBorder}
  text-align: center;
  vertical-align: middle;
`;

const CheckBox = styled.input`
  display: block;
  appearance: none;
  width: 13px;
  height: 13px;
  margin: 0 auto;
  border: 1px solid #8e8f8f;
  background: linear-gradient(135deg, #cfd2d8, #fafafa);
  box-shadow: inset 0 0 0 2px #f4f4f4;
  &:checked {
    background: #3399ff;
  }
`;

const CanvasColumn = styled.div`
  flex: 1;
  display: flex;
  flex-direction: column;
  min-width: 0;
  border-right: 1px solid #8fb4e0;
`;

const CanvasArea = styled.div`
  flex: 1;
  min-height: 0;
  overflow: hidden;
  background: #000;
`;

const DrawingSvg = styled.svg`
  display: block;
`;

const CadText = styled.text`
  fill: #fff;
  font-family: "Open Sans", sans-serif;
  font-size: ${(p) => p.$size}px;
  font-weight: 300;
`;

const SocketText = styled.text`
  fill: #ffdc8f;
  font-family: "DejaVu Sans Condensed", "DejaVu Sans", sans-serif;
  font-size: 10px;
`;

const RoomText = styled.text`
  fill: #fff;
  font-family: "Noto Sans CJK SC", sans-serif;
  font-size: 18px;
  font-weight: 300;
`;

const MarkupSvg = styled.svg`
  position: absolute;
  inset: 0;
  width: 100%;
  height: 100%;
  pointer-events: none;
`;

const SpeedBall = styled.button`
  position: absolute;
  right: -28px;
  bottom: 25px;
  width: 46px;
  height: 46px;
  padding-left: 1px;
  border: 2px solid #fff;
  border-radius: 50%;
  background: linear-gradient(#ff9a3c, #f57c0c);
  box-shadow: inset 0 0 0 1px #b8500c, 0 1px 3px rgba(0, 0, 0, 0.6);
  color: #fff;
  font-family: "DejaVu Sans", sans-serif;
  font-size: 10px;
  font-weight: 700;
  text-align: left;
`;

const Status = styled.footer`
  flex: none;
  display: flex;
  align-items: flex-start;
  height: 19px;
  overflow: hidden;
  background: linear-gradient(#fff, #e9edf6 9px, #d3daec 10px);
`;

const Grip = styled.i`
  flex: none;
  width: 2px;
  height: 19px;
  margin: 0 5px 0 2px;
  background: repeating-linear-gradient(#b8b8b8 0 2px, transparent 2px 4px);
`;

const StatusToggle = styled.button`
  flex: none;
  height: 22px;
  margin-top: 4px;
  padding: 0 4px;
  border: 1px solid transparent;
  border-radius: 3px;
  ${(p) =>
    p.$on &&
    css`
      border-color: #4a4e58;
      background: linear-gradient(#b9bfcc, #dfe3ec 6px);
    `}
`;

const Divider = styled.i`
  flex: none;
  width: 1px;
  height: 19px;
  margin-left: 6px;
  background: #b5b5b5;
`;

const SnapGroup = styled.div`
  flex: none;
  display: flex;
  padding-left: 3px;
`;

const SnapButton = styled.button`
  flex: none;
  display: flex;
  align-items: center;
  gap: 5px;
  height: 20px;
  margin-top: 4px;
  padding-right: 6px;
  &:last-child {
    padding-right: 0;
  }
`;

const StatusBlank = styled.div`
  flex: 300 1 0;
  height: 19px;
  background: #f0f0f0;
`;

const StatusEnd = styled.div`
  flex: 126 1 0;
  height: 19px;
  border-left: 1px solid #b5b5b5;
`;
